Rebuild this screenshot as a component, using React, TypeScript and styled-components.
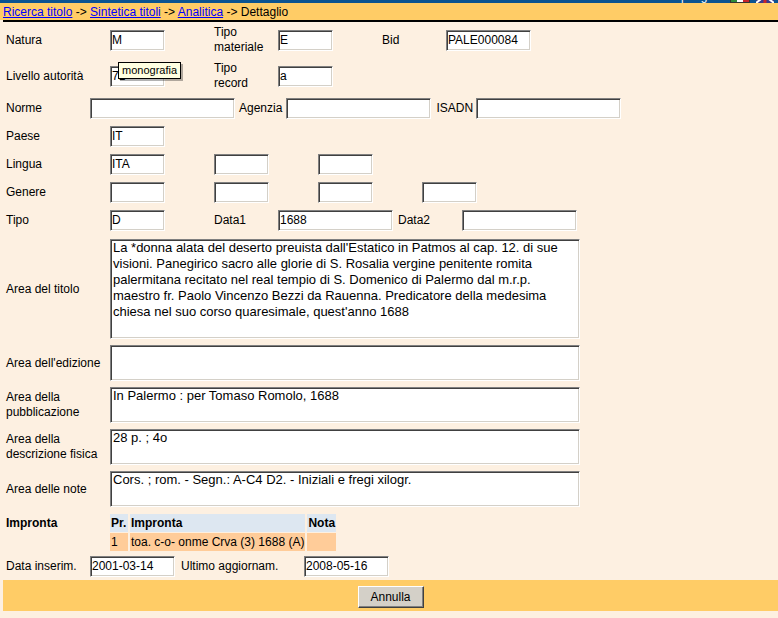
import React from 'react'
import styled, { createGlobalStyle } from 'styled-components'

const GlobalStyle = createGlobalStyle`
  html, body {
    margin: 0;
    padding: 0;
    background: #fdf0e1;
  }
  body {
    font-family: 'Liberation Sans', Arial, sans-serif;
    font-size: 12px;
    color: #000;
  }
`

const Page = styled.div`
  width: 778px;
  height: 618px;
  overflow: hidden;
  background: #fdf0e1;
`

const TopStrip = styled.div`
  height: 3px;
  overflow: hidden;
  background: #0b5391;
  color: #fff;
  display: flex;
  justify-content: space-between;
  align-items: flex-end;
  font-size: 12px;
  line-height: 14px;
`

const UserInfo = styled.div`
  flex: none;
  padding-left: 1px;
  white-space: nowrap;
`

const TopLinks = styled.div`
  flex: none;
  display: flex;
  align-items: flex-end;
  gap: 6px;
  padding-right: 4px;
  white-space: nowrap;
`

const Breadcrumb = styled.div`
  height: 17px;
  line-height: 18px;
  padding-left: 3px;
  background: #ffcc66;
  white-space: nowrap;

  a {
    color: #0000ff;
    text-decoration: underline;
  }
`

const Content = styled.div`
  margin-left: 3px;
`

const Rule = styled.div`
  height: 2px;
  background: #000;
`

const Row = styled.div<{ $top?: boolean; $pt?: number; $pb?: number }>`
  display: flex;
  align-items: ${({ $top }) => ($top ? 'flex-start' : 'center')};
  min-height: 22px;
  padding: ${({ $pt = 3, $pb = 3 }) => `${$pt}px 3px ${$pb}px 3px`};
`

const Label = styled.div<{ $w?: number; $pl?: number; $bold?: boolean }>`
  flex: none;
  box-sizing: border-box;
  width: ${({ $w }) => ($w ? `${$w}px` : 'auto')};
  padding-left: ${({ $pl = 0 }) => $pl}px;
  line-height: 15px;
  font-weight: ${({ $bold }) => ($bold ? 'bold' : 'normal')};
`

const InlineLabel = styled.div<{ $pl?: number; $pr?: number }>`
  flex: none;
  padding: ${({ $pl = 4, $pr = 4 }) => `0 ${$pr}px 0 ${$pl}px`};
  line-height: 15px;
`

const Field = styled.div<{ $w?: number }>`
  flex: none;
  position: relative;
  display: flex;
  width: ${({ $w }) => ($w ? `${$w}px` : 'auto')};
`

const Input = styled.input<{ $w: number }>`
  box-sizing: border-box;
  width: ${({ $w }) => $w}px;
  height: 21px;
  margin: 0;
  padding: 0 1px;
  background: #fff;
  color: #000;
  font-family: 'Liberation Sans', Arial, sans-serif;
  font-size: 12px;
  border: 1px solid;
  border-color: #808080 #fff #fff #808080;
  box-shadow: inset 1px 1px 0 #404040, inset -1px -1px 0 #d4d0c8;
  outline: none;
`

const TextArea = styled.textarea<{ $h: number }>`
  box-sizing: border-box;
  width: 470px;
  height: ${({ $h }) => $h}px;
  margin: 0;
  padding: 0 2px;
  resize: none;
  overflow: hidden;
  background: #fff;
  color: #000;
  font-family: 'Liberation Sans', Arial, sans-serif;
  font-size: 13px;
  line-height: 16px;
  border: 1px solid;
  border-color: #808080 #fff #fff #808080;
  box-shadow: inset 1px 1px 0 #404040, inset -1px -1px 0 #d4d0c8;
  outline: none;
`

const Tooltip = styled.div`
  position: absolute;
  left: 8px;
  top: -4px;
  z-index: 2;
  padding: 0 3px;
  background: #ffffe1;
  border: 1px solid #000;
  font-size: 11px;
  line-height: 15px;
  white-space: nowrap;
  box-shadow: 2px 2px 0 rgba(0, 0, 0, 0.3);
`

const StampTable = styled.table`
  border-collapse: separate;
  border-spacing: 2px 1px;
  margin-left: -2px;
  font-size: 12px;
`

const HeadCell = styled.th<{ $w: number }>`
  width: ${({ $w }) => $w}px;
  height: 18px;
  padding: 0 1px;
  background: #dde7f1;
  text-align: left;
  font-weight: bold;
  white-space: nowrap;
`

const BodyCell = styled.td`
  height: 18px;
  padding: 0 1px;
  background: #ffcc99;
  white-space: nowrap;
`

const BottomBar = styled.div`
  box-sizing: border-box;
  height: 31px;
  padding-top: 6px;
  display: flex;
  justify-content: center;
  align-items: flex-start;
  background: #ffcc66;
`

const Button = styled.button`
  width: 66px;
  height: 22px;
  padding: 0;
  background: #d4d0c8;
  color: #000;
  font-family: 'Liberation Sans', Arial, sans-serif;
  font-size: 12px;
  border: 1px solid;
  border-color: #fff #404040 #404040 #fff;
  box-shadow: inset -1px -1px 0 #808080;
`

const titolo = [
  "La *donna alata del deserto preuista dall'Estatico in Patmos al cap. 12. di sue",
  'visioni. Panegirico sacro alle glorie di S. Rosalia vergine penitente romita',
  'palermitana recitato nel real tempio di S. Domenico di Palermo dal m.r.p.',
  'maestro fr. Paolo Vincenzo Bezzi da Rauenna. Predicatore della medesima',
  "chiesa nel suo corso quaresimale, quest'anno 1688",
].join('\n')

const FlagIt = () => (
  <svg width="20" height="14" viewBox="0 0 20 14">
    <rect x="0.5" y="0.5" width="19" height="13" fill="#fff" stroke="#333" />
    <rect x="1" y="1" width="6" height="12" fill="#2e8b3a" />
    <rect x="13" y="1" width="6" height="12" fill="#c8242b" />
  </svg>
)

const FlagUk = () => (
  <svg width="18" height="14" viewBox="0 0 18 14">
    <rect width="18" height="14" fill="#3a3a8c" />
    <path d="M0 0 L18 14 M18 0 L0 14" stroke="#fff" strokeWidth="2" />
    <path d="M9 0 V14 M0 7 H18" stroke="#c8242b" strokeWidth="3" />
  </svg>
)

const ro = () => undefined

const App: React.FC = () => {
  return (
    <Page>
      <GlobalStyle />
      <TopStrip>
        <UserInfo>Utente: bbtFC</UserInfo>
        <TopLinks>
          <span>Guida | Logout</span>
          <FlagIt />
          <FlagUk />
        </TopLinks>
      </TopStrip>
      <Breadcrumb>
        <a href="#ricerca">Ricerca titolo</a> -&gt; <a href="#sintetica">Sintetica titoli</a> -&gt;{' '}
        <a href="#analitica">Analitica</a> -&gt; Dettaglio
      </Breadcrumb>

      <Content>
        <Rule />

        <Row>
          <Label $w={104}>Natura</Label>
          <Field $w={104}>
            <Input $w={55} value="M" onChange={ro} />
          </Field>
          <Label $w={64}>
            Tipo
            <br />
            materiale
          </Label>
          <Field $w={104}>
            <Input $w={55} value="E" onChange={ro} />
          </Field>
          <Label $w={64}>Bid</Label>
          <Field>
            <Input $w={85} value="PALE000084" onChange={ro} />
          </Field>
        </Row>

        <Row>
          <Label $w={104}>Livello autorità</Label>
          <Field $w={104}>
            <Input $w={55} value="71" onChange={ro} />
            <Tooltip>monografia</Tooltip>
          </Field>
          <Label $w={64}>
            Tipo
            <br />
            record
          </Label>
          <Field $w={104}>
            <Input $w={55} value="a" onChange={ro} />
          </Field>
        </Row>

        <Row>
          <Label $w={84}>Norme</Label>
          <Input $w={145} value="" onChange={ro} />
          <InlineLabel>Agenzia</InlineLabel>
          <Input $w={145} value="" onChange={ro} />
          <InlineLabel $pl={5} $pr={3}>
            ISADN
          </InlineLabel>
          <Input $w={145} value="" onChange={ro} />
        </Row>

        <Row>
          <Label $w={104}>Paese</Label>
          <Field>
            <Input $w={55} value="IT" onChange={ro} />
          </Field>
        </Row>

        <Row>
          <Label $w={104}>Lingua</Label>
          <Field $w={104}>
            <Input $w={55} value="ITA" onChange={ro} />
          </Field>
          <Field $w={104}>
            <Input $w={55} value="" onChange={ro} />
          </Field>
          <Field $w={104}>
            <Input $w={55} value="" onChange={ro} />
          </Field>
        </Row>

        <Row>
          <Label $w={104}>Genere</Label>
          <Field $w={104}>
            <Input $w={55} value="" onChange={ro} />
          </Field>
          <Field $w={104}>
            <Input $w={55} value="" onChange={ro} />
          </Field>
          <Field $w={104}>
            <Input $w={55} value="" onChange={ro} />
          </Field>
          <Field $w={104}>
            <Input $w={55} value="" onChange={ro} />
          </Field>
        </Row>

        <Row>
          <Label $w={104}>Tipo</Label>
          <Field $w={104}>
            <Input $w={55} value="D" onChange={ro} />
          </Field>
          <Label $w={64}>Data1</Label>
          <Field $w={120}>
            <Input $w={115} value="1688" onChange={ro} />
          </Field>
          <Label $w={64}>Data2</Label>
          <Field>
            <Input $w={115} value="" onChange={ro} />
          </Field>
        </Row>

        <Row $pt={5}>
          <Label $w={104}>Area del titolo</Label>
          <TextArea $h={100} value={titolo} onChange={ro} />
        </Row>

        <Row>
          <Label $w={104}>Area dell'edizione</Label>
          <TextArea $h={36} value="" onChange={ro} />
        </Row>

        <Row>
          <Label $w={104}>Area della pubblicazione</Label>
          <TextArea $h={36} value="In Palermo : per Tomaso Romolo, 1688" onChange={ro} />
        </Row>

        <Row>
          <Label $w={104}>Area della descrizione fisica</Label>
          <TextArea $h={36} value="28 p. ; 4o" onChange={ro} />
        </Row>

        <Row>
          <Label $w={104}>Area delle note</Label>
          <TextArea $h={36} value="Cors. ; rom. - Segn.: A-C4 D2. - Iniziali e fregi xilogr." onChange={ro} />
        </Row>

        <Row $top $pb={0}>
          <Label $w={104} $bold style={{ lineHeight: '20px' }}>
            Impronta
          </Label>
          <StampTable>
            <thead>
              <tr>
                <HeadCell $w={16}>Pr.</HeadCell>
                <HeadCell $w={173}>Impronta</HeadCell>
                <HeadCell $w={27}>Nota</HeadCell>
              </tr>
            </thead>
            <tbody>
              <tr>
                <BodyCell>1</BodyCell>
                <BodyCell>toa. c-o- onme Crva (3) 1688 (A)</BodyCell>
                <BodyCell />
              </tr>
            </tbody>
          </StampTable>
        </Row>

        <Row>
          <Label $w={84}>Data inserim.</Label>
          <Input $w={85} value="2001-03-14" onChange={ro} />
          <Label $w={129} $pl={6}>
            Ultimo aggiornam.
          </Label>
          <Input $w={85} value="2008-05-16" onChange={ro} />
        </Row>

        <BottomBar>
          <Button type="button">Annulla</Button>
        </BottomBar>
      </Content>
    </Page>
  )
}

export default App
